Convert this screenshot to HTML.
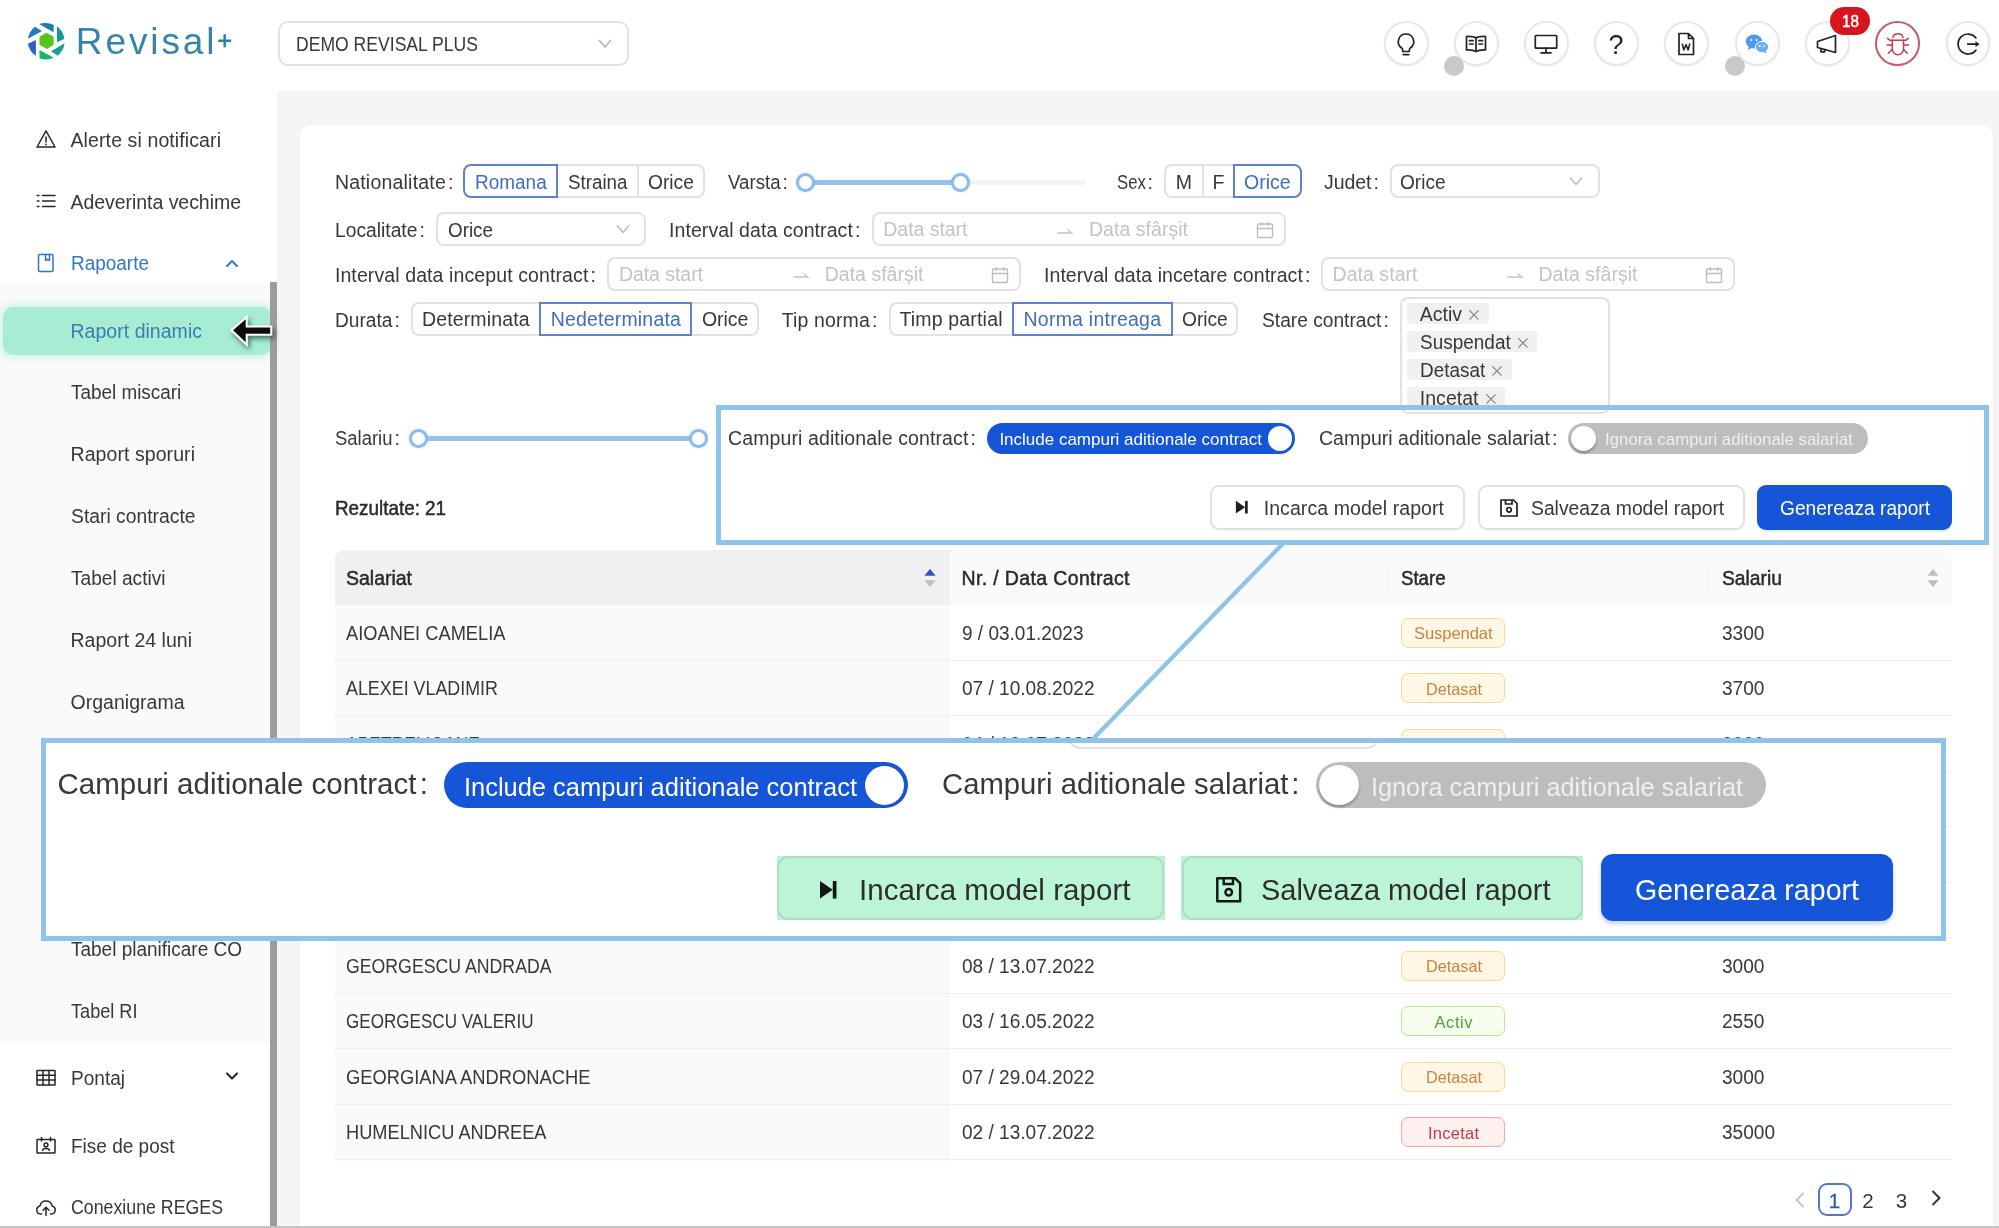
<!DOCTYPE html>
<html><head><meta charset="utf-8"><title>Revisal+</title>
<style>
html,body{margin:0;padding:0;background:#fff;}
body{width:1999px;height:1228px;position:relative;overflow:hidden;font-family:"Liberation Sans",sans-serif;}
div,span.t,svg.a{position:absolute;box-sizing:border-box;}
span.t{white-space:nowrap;display:block;}
#w{left:0;top:0;width:1999px;height:1228px;overflow:hidden;will-change:transform;}
</style></head><body><div id="w">
<div style="left:277.0px;top:91.4px;width:1722.0px;height:1137.0px;background:#f5f5f5;"></div>
<div style="left:300.0px;top:125.0px;width:1693.0px;height:1120.0px;background:#fff;border-radius:12px;"></div>
<div style="left:0.0px;top:283.0px;width:270.0px;height:760.0px;background:#fafafa;"></div>
<div style="left:270.0px;top:282.0px;width:7.0px;height:946.0px;background:#9c9c9c;"></div>
<svg class="a" style="left:20.0px;top:15.0px;" width="60" height="52" viewBox="0 0 1417 1228">
<path d="M450,215 A445,445 0 0 1 800,235 L790,405 Z" fill="#1a7fae"/>
<path d="M870,265 A445,445 0 0 1 1048,560 L875,645 Z" fill="#1a93a3"/>
<path d="M1052,670 A445,445 0 0 1 890,962 L735,855 Z" fill="#17a093"/>
<path d="M800,1012 A445,445 0 0 1 460,1022 L460,825 Z" fill="#16b868"/>
<path d="M375,967 A445,445 0 0 1 188,680 L375,590 Z" fill="#2a5fd0"/>
<path d="M188,562 A445,445 0 0 1 350,278 L520,375 Z" fill="#1a80b3"/>
<path d="M625,420 L795,515 L795,705 L640,800 L460,705 L460,515 Z" fill="#55c51c"/></svg>
<span class="t" style="left:75.8px;top:15.5px;font-size:37px;line-height:52px;color:#3585ab;font-weight:400;letter-spacing:2.897px;">Revisal</span>
<svg class="a" style="left:216.0px;top:32.0px;" width="18" height="18" viewBox="0 0 18 18"><path d="M8.700,2.200 V15.200 M2.200,8.700 H15.200" stroke="#2c7fa6" stroke-width="2.500" fill="none"/></svg>
<div style="left:278.0px;top:21.0px;width:351.0px;height:45.0px;border:2px solid #e1e1e1;border-radius:10px;background:#fff;"></div>
<span class="t" style="left:296.0px;top:31.0px;font-size:19.5px;line-height:27px;color:#383838;font-weight:400;transform:scaleX(0.9013);transform-origin:0 50%;">DEMO REVISAL PLUS</span>
<svg class="a" style="left:597.0px;top:38.0px;" width="16" height="12" viewBox="0 0 16 12"><path d="M2,2 L8,9 L14,2" fill="none" stroke="#b5b5b5" stroke-width="1.6"/></svg>
<div style="left:1444.0px;top:56.0px;width:20.0px;height:20.0px;background:#c9c9c9;border-radius:50%;"></div>
<div style="left:1725.0px;top:56.0px;width:20.0px;height:20.0px;background:#c9c9c9;border-radius:50%;"></div>
<div style="left:1383.9px;top:20.9px;width:44.8px;height:44.8px;border:2px solid #e7e7e7;border-radius:50%;background:#fff;box-shadow:0 1px 3px rgba(0,0,0,0.05);"></div>
<div style="left:1454.1px;top:20.9px;width:44.8px;height:44.8px;border:2px solid #e7e7e7;border-radius:50%;background:#fff;box-shadow:0 1px 3px rgba(0,0,0,0.05);"></div>
<div style="left:1524.1px;top:20.9px;width:44.8px;height:44.8px;border:2px solid #e7e7e7;border-radius:50%;background:#fff;box-shadow:0 1px 3px rgba(0,0,0,0.05);"></div>
<div style="left:1594.3px;top:20.9px;width:44.8px;height:44.8px;border:2px solid #e7e7e7;border-radius:50%;background:#fff;box-shadow:0 1px 3px rgba(0,0,0,0.05);"></div>
<div style="left:1664.3px;top:20.9px;width:44.8px;height:44.8px;border:2px solid #e7e7e7;border-radius:50%;background:#fff;box-shadow:0 1px 3px rgba(0,0,0,0.05);"></div>
<div style="left:1735.1px;top:20.9px;width:44.8px;height:44.8px;border:2px solid #e7e7e7;border-radius:50%;background:#fff;box-shadow:0 1px 3px rgba(0,0,0,0.05);"></div>
<div style="left:1805.1px;top:20.9px;width:44.8px;height:44.8px;border:2px solid #e7e7e7;border-radius:50%;background:#fff;box-shadow:0 1px 3px rgba(0,0,0,0.05);"></div>
<div style="left:1875.4px;top:20.9px;width:44.8px;height:44.8px;border:2px solid #c65c69;border-radius:50%;background:#fff;box-shadow:0 1px 3px rgba(0,0,0,0.05);"></div>
<div style="left:1945.6px;top:20.9px;width:44.8px;height:44.8px;border:2px solid #e7e7e7;border-radius:50%;background:#fff;box-shadow:0 1px 3px rgba(0,0,0,0.05);"></div>
<svg class="a" style="left:1394.0px;top:31.0px;" width="24" height="28" viewBox="0 0 24 28"><path d="M12,3 a7.600,7.600 0 0 1 4.600,13.700 c-0.900,0.800 -1.300,1.600 -1.300,2.600 v1.200 h-6.600 v-1.200 c0,-1 -0.400,-1.800 -1.300,-2.600 A7.600,7.600 0 0 1 12,3 Z" fill="none" stroke="#222" stroke-width="1.7" stroke-linecap="round" stroke-linejoin="round"/><path d="M9.200,23.600 h5.600" fill="none" stroke="#222" stroke-width="1.7" stroke-linecap="round" stroke-linejoin="round"/></svg>
<svg class="a" style="left:1464.0px;top:32.0px;" width="24" height="24" viewBox="0 0 24 24"><path d="M12,6 C10,4.6 6,4.3 2.5,4.5 V18 C6,17.8 10,18.2 12,19.6 C14,18.2 18,17.8 21.5,18 V4.5 C18,4.3 14,4.6 12,6 Z M12,6 V19.6" fill="none" stroke="#222" stroke-width="1.7" stroke-linecap="round" stroke-linejoin="round"/><path d="M5.5,8.7 h3.6 M5.5,12 h3.6 M14.9,8.7 h3.6 M14.9,12 h3.6" fill="none" stroke="#222" stroke-width="1.7" stroke-linecap="round" stroke-linejoin="round"/></svg>
<svg class="a" style="left:1534.0px;top:32.0px;" width="24" height="24" viewBox="0 0 24 24"><rect x="1.300" y="3.500" width="21.400" height="12.700" rx="0.800" fill="none" stroke="#222" stroke-width="1.7" stroke-linecap="round" stroke-linejoin="round"/><path d="M12,16.200 v4.300 M7,20.800 h10" fill="none" stroke="#222" stroke-width="1.7" stroke-linecap="round" stroke-linejoin="round"/></svg>
<span class="t" style="left:1608.5px;top:25.5px;font-size:27px;line-height:38px;color:#222;font-weight:400;letter-spacing:0.000px;">?</span>
<svg class="a" style="left:1674.0px;top:31.0px;" width="24" height="26" viewBox="0 0 24 26"><path d="M5,2.5 h9.5 l5,5 V23.5 H5 Z M14.5,2.5 v5 h5" fill="none" stroke="#222" stroke-width="1.7" stroke-linecap="round" stroke-linejoin="round"/><path d="M8.3,13 l1.6,6 l2.1,-5.4 l2.1,5.4 l1.6,-6" fill="none" stroke="#222" stroke-width="1.5" stroke-linejoin="round" stroke-linecap="round"/></svg>
<svg class="a" style="left:1744.0px;top:32.0px;" width="26" height="24" viewBox="0 0 26 24"><ellipse cx="10" cy="9.5" rx="8.2" ry="7" fill="#4c9bf0"/><path d="M5,14 l-1,4 l4.5,-2.4 Z" fill="#4c9bf0"/><ellipse cx="18" cy="15" rx="6.6" ry="5.6" fill="#6aaef5" stroke="#fff" stroke-width="1"/><path d="M21.5,19 l1.2,2.8 l-3.8,-1.8 Z" fill="#6aaef5"/><circle cx="7.2" cy="8" r="1" fill="#fff"/><circle cx="12.6" cy="8" r="1" fill="#fff"/><circle cx="15.8" cy="14" r="0.9" fill="#fff"/><circle cx="20" cy="14" r="0.9" fill="#fff"/></svg>
<svg class="a" style="left:1814.0px;top:32.0px;" width="26" height="24" viewBox="0 0 26 24"><path d="M3.5,9.5 L21.5,3.5 V20.5 L3.5,15.5 Z" fill="none" stroke="#222" stroke-width="1.7" stroke-linecap="round" stroke-linejoin="round"/><path d="M7,16.6 v3.2 h3.6 v-2.2" fill="none" stroke="#222" stroke-width="1.7" stroke-linecap="round" stroke-linejoin="round"/></svg>
<div style="left:1830.0px;top:6.8px;width:40.0px;height:28.4px;background:#d8141f;border-radius:14.200px;"></div>
<span class="t" style="left:1841.5px;top:10.8px;font-size:16px;line-height:22px;color:#fff;font-weight:400;transform:scaleX(0.9552);transform-origin:0 50%;-webkit-text-stroke:0.5px #fff;">18</span>
<svg class="a" style="left:1870.0px;top:15.0px;" width="129" height="60" viewBox="0 0 1999 930"><path d="M355,350 A78,68 0 0 1 510,350" fill="none" stroke="#c63a4c" stroke-width="23" stroke-linecap="round" stroke-linejoin="round"/><path d="M272,362 L305,392 H560 L592,362" fill="none" stroke="#c63a4c" stroke-width="23" stroke-linecap="round" stroke-linejoin="round"/><path d="M345,392 V520 A87.500,95 0 0 0 520,520 V392" fill="none" stroke="#c63a4c" stroke-width="23" stroke-linecap="round" stroke-linejoin="round"/><path d="M265,465 H345 M520,465 H597 M345,535 L285,592 M520,535 L578,592" fill="none" stroke="#c63a4c" stroke-width="23" stroke-linecap="round" stroke-linejoin="round"/><path d="M1642,355 A155,155 0 1 0 1642,545" fill="none" stroke="#222" stroke-width="26" stroke-linecap="round" stroke-linejoin="round"/><path d="M1515,452 H1650" fill="none" stroke="#222" stroke-width="26" stroke-linecap="round" stroke-linejoin="round"/><path d="M1635,408 L1700,452 L1635,496 Z" fill="#222"/></svg>
<svg class="a" style="left:35.0px;top:128.0px;" width="22" height="22" viewBox="0 0 22 22"><path d="M11,2.8 L20,19 H2 Z" fill="none" stroke="#262626" stroke-width="1.5" stroke-linecap="round" stroke-linejoin="round"/><path d="M11,9 v5" fill="none" stroke="#262626" stroke-width="1.5" stroke-linecap="round" stroke-linejoin="round"/><circle cx="11" cy="16.4" r="0.9" fill="#262626"/></svg>
<span class="t" style="left:70.5px;top:126.5px;font-size:19.5px;line-height:27px;color:#383838;font-weight:400;letter-spacing:0.107px;">Alerte si notificari</span>
<svg class="a" style="left:35.0px;top:190.0px;" width="22" height="22" viewBox="0 0 22 22"><path d="M7.5,5.5 H20 M7.5,11 H20 M7.5,16.5 H20" fill="none" stroke="#262626" stroke-width="1.5" stroke-linecap="round" stroke-linejoin="round"/><path d="M2.3,5.5 h1.6 M2.3,11 h1.6 M2.3,16.5 h1.6" fill="none" stroke="#262626" stroke-width="1.5" stroke-linecap="round" stroke-linejoin="round"/></svg>
<span class="t" style="left:70.5px;top:188.5px;font-size:19.5px;line-height:27px;color:#383838;font-weight:400;letter-spacing:-0.045px;">Adeverinta vechime</span>
<svg class="a" style="left:35.0px;top:252.0px;" width="22" height="22" viewBox="0 0 22 22"><rect x="3.5" y="2.5" width="14.5" height="17" rx="1" fill="none" stroke="#3576c4" stroke-width="1.5" stroke-linecap="round" stroke-linejoin="round"/><path d="M10.5,2.5 v6 l2,-1.4 l2,1.4 v-6" fill="none" stroke="#3576c4" stroke-width="1.5" stroke-linecap="round" stroke-linejoin="round"/></svg>
<span class="t" style="left:70.5px;top:250.0px;font-size:19.5px;line-height:27px;color:#3576c4;font-weight:400;transform:scaleX(0.9723);transform-origin:0 50%;">Rapoarte</span>
<svg class="a" style="left:224.0px;top:257.0px;" width="16" height="12" viewBox="0 0 16 12"><path d="M3,9 L8,4 L13,9" fill="none" stroke="#3576c4" stroke-width="2" stroke-linecap="round" stroke-linejoin="round"/></svg>
<div style="left:3.0px;top:306.5px;width:268.0px;height:48.0px;background:#a6edd4;border-radius:10px;box-shadow:0 0 8px 3px rgba(166,237,212,0.55);"></div>
<span class="t" style="left:70.5px;top:317.5px;font-size:19.5px;line-height:27px;color:#3a7cb4;font-weight:400;letter-spacing:0.027px;">Raport dinamic</span>
<div style="left:270.0px;top:282.0px;width:7.0px;height:946.0px;background:#9c9c9c;"></div>
<svg class="a" style="left:226.0px;top:312.0px;filter:drop-shadow(2px 3px 2.500px rgba(0,40,20,0.600));" width="52" height="38" viewBox="0 0 52 38"><path d="M7,18.300 L19.700,7.300 V15.500 H44.200 V21.700 H19.700 V30.300 Z" fill="#0c0c0c" stroke="#fff" stroke-width="4.200" stroke-linejoin="miter" paint-order="stroke"/></svg>
<span class="t" style="left:70.5px;top:379.0px;font-size:19.5px;line-height:27px;color:#383838;font-weight:400;transform:scaleX(0.9685);transform-origin:0 50%;">Tabel miscari</span>
<span class="t" style="left:70.5px;top:441.0px;font-size:19.5px;line-height:27px;color:#383838;font-weight:400;letter-spacing:0.073px;">Raport sporuri</span>
<span class="t" style="left:70.5px;top:503.0px;font-size:19.5px;line-height:27px;color:#383838;font-weight:400;transform:scaleX(0.9902);transform-origin:0 50%;">Stari contracte</span>
<span class="t" style="left:70.5px;top:565.0px;font-size:19.5px;line-height:27px;color:#383838;font-weight:400;transform:scaleX(0.9796);transform-origin:0 50%;">Tabel activi</span>
<span class="t" style="left:70.5px;top:627.0px;font-size:19.5px;line-height:27px;color:#383838;font-weight:400;letter-spacing:0.007px;">Raport 24 luni</span>
<span class="t" style="left:70.5px;top:688.5px;font-size:19.5px;line-height:27px;color:#383838;font-weight:400;letter-spacing:0.019px;">Organigrama</span>
<span class="t" style="left:70.5px;top:935.5px;font-size:19.5px;line-height:27px;color:#383838;font-weight:400;transform:scaleX(0.9738);transform-origin:0 50%;">Tabel planificare CO</span>
<span class="t" style="left:70.5px;top:997.5px;font-size:19.5px;line-height:27px;color:#383838;font-weight:400;transform:scaleX(0.9296);transform-origin:0 50%;">Tabel RI</span>
<svg class="a" style="left:35.0px;top:1067.0px;" width="22" height="22" viewBox="0 0 22 22"><rect x="2" y="3.5" width="18" height="14.5" rx="0.5" fill="none" stroke="#262626" stroke-width="1.5" stroke-linecap="round" stroke-linejoin="round"/><path d="M2,8.3 H20 M2,13.100 H20 M8,3.5 V18 M14,3.5 V18" fill="none" stroke="#262626" stroke-width="1.5" stroke-linecap="round" stroke-linejoin="round"/></svg>
<span class="t" style="left:70.5px;top:1065.0px;font-size:19.5px;line-height:27px;color:#383838;font-weight:400;transform:scaleX(0.9766);transform-origin:0 50%;">Pontaj</span>
<svg class="a" style="left:224.0px;top:1070.0px;" width="16" height="12" viewBox="0 0 16 12"><path d="M3,3.5 L8,8.5 L13,3.5" fill="none" stroke="#222" stroke-width="2" stroke-linecap="round" stroke-linejoin="round"/></svg>
<svg class="a" style="left:35.0px;top:1135.0px;" width="22" height="22" viewBox="0 0 22 22"><rect x="2" y="4.500" width="18" height="13.5" rx="0.5" fill="none" stroke="#262626" stroke-width="1.5" stroke-linecap="round" stroke-linejoin="round"/><path d="M6.500,2.5 v3.500 M15.5,2.5 v3.500" fill="none" stroke="#262626" stroke-width="1.5" stroke-linecap="round" stroke-linejoin="round"/><circle cx="11" cy="10" r="1.9" fill="none" stroke="#262626" stroke-width="1.5" stroke-linecap="round" stroke-linejoin="round"/><path d="M7.6,15.3 c0.5,-2.300 6.300,-2.300 6.800,0" fill="none" stroke="#262626" stroke-width="1.5" stroke-linecap="round" stroke-linejoin="round"/></svg>
<span class="t" style="left:70.5px;top:1132.5px;font-size:19.5px;line-height:27px;color:#383838;font-weight:400;transform:scaleX(0.9743);transform-origin:0 50%;">Fise de post</span>
<svg class="a" style="left:35.0px;top:1196.8px;" width="22" height="22" viewBox="0 0 22 22"><path d="M6.5,17 H5.500 a4,4 0 0 1 -0.600,-7.9 a6.200,6.200 0 0 1 12.200,0 a4,4 0 0 1 -0.600,7.900 H15.500" fill="none" stroke="#262626" stroke-width="1.5" stroke-linecap="round" stroke-linejoin="round"/><path d="M11,18.5 V10.500 M8,13.300 l3,-3 l3,3" fill="none" stroke="#262626" stroke-width="1.5" stroke-linecap="round" stroke-linejoin="round"/></svg>
<span class="t" style="left:70.5px;top:1194.0px;font-size:19.5px;line-height:27px;color:#383838;font-weight:400;transform:scaleX(0.9106);transform-origin:0 50%;">Conexiune REGES</span>
<div style="left:0.0px;top:1226.0px;width:1999.0px;height:2.0px;background:#c6c6c6;"></div>
<span class="t" style="left:334.9px;top:169.1px;font-size:19.5px;line-height:27px;color:#383838;font-weight:400;letter-spacing:0.210px;">Nationalitate</span>
<span class="t" style="left:448.1px;top:169.1px;font-size:19.5px;line-height:27px;color:#383838;font-weight:400;letter-spacing:0.000px;">:</span>
<div style="left:464.5px;top:164.3px;width:240.0px;height:33.3px;border:2px solid #e1e1e1;border-radius:8px;background:#fff;"></div>
<div style="left:556.0px;top:165.3px;width:2.0px;height:31.3px;background:#e1e1e1;"></div>
<div style="left:637.0px;top:165.3px;width:2.0px;height:31.3px;background:#e1e1e1;"></div>
<div style="left:463.0px;top:164.3px;width:94.7px;height:33.3px;border:2px solid #5d83cc;border-radius:8px 0 0 8px;background:#fff;"></div>
<span class="t" style="left:475.0px;top:168.7px;font-size:19.5px;line-height:27px;color:#3f6dbd;font-weight:400;transform:scaleX(0.9727);transform-origin:0 50%;">Romana</span>
<span class="t" style="left:567.7px;top:168.7px;font-size:19.5px;line-height:27px;color:#383838;font-weight:400;transform:scaleX(0.9614);transform-origin:0 50%;">Straina</span>
<span class="t" style="left:648.1px;top:168.7px;font-size:19.5px;line-height:27px;color:#383838;font-weight:400;transform:scaleX(0.9852);transform-origin:0 50%;">Orice</span>
<span class="t" style="left:727.7px;top:169.1px;font-size:19.5px;line-height:27px;color:#383838;font-weight:400;transform:scaleX(0.9583);transform-origin:0 50%;">Varsta</span>
<span class="t" style="left:782.6px;top:169.1px;font-size:19.5px;line-height:27px;color:#383838;font-weight:400;letter-spacing:0.000px;">:</span>
<div style="left:960.0px;top:180.0px;width:126.0px;height:5.0px;background:#f4f4f4;border-radius:3px;"></div>
<div style="left:805.5px;top:180.0px;width:154.5px;height:5.0px;background:#8fc3f0;border-radius:3px;"></div>
<div style="left:796.0px;top:173.0px;width:19.0px;height:19.0px;background:#fff;border:3px solid #8bbcec;border-radius:50%;box-shadow:0 0 2px rgba(120,170,230,0.500);"></div>
<div style="left:950.5px;top:173.0px;width:19.0px;height:19.0px;background:#fff;border:3px solid #8bbcec;border-radius:50%;box-shadow:0 0 2px rgba(120,170,230,0.500);"></div>
<span class="t" style="left:1116.5px;top:169.1px;font-size:19.5px;line-height:27px;color:#383838;font-weight:400;transform:scaleX(0.8578);transform-origin:0 50%;">Sex</span>
<span class="t" style="left:1147.6px;top:169.1px;font-size:19.5px;line-height:27px;color:#383838;font-weight:400;letter-spacing:0.000px;">:</span>
<div style="left:1164.3px;top:164.3px;width:136.7px;height:33.3px;border:2px solid #e1e1e1;border-radius:8px;background:#fff;"></div>
<div style="left:1202.0px;top:165.3px;width:2.0px;height:31.3px;background:#e1e1e1;"></div>
<div style="left:1233.0px;top:165.3px;width:2.0px;height:31.3px;background:#e1e1e1;"></div>
<span class="t" style="left:1175.7px;top:168.7px;font-size:19.5px;line-height:27px;color:#383838;font-weight:400;letter-spacing:0.000px;">M</span>
<span class="t" style="left:1212.5px;top:168.7px;font-size:19.5px;line-height:27px;color:#383838;font-weight:400;letter-spacing:0.000px;">F</span>
<div style="left:1233.0px;top:164.3px;width:69.4px;height:33.3px;border:2px solid #5d83cc;border-radius:0 8px 8px 0;background:#fff;"></div>
<span class="t" style="left:1244.1px;top:168.7px;font-size:19.5px;line-height:27px;color:#3f6dbd;font-weight:400;letter-spacing:-0.047px;">Orice</span>
<span class="t" style="left:1324.0px;top:169.1px;font-size:19.5px;line-height:27px;color:#383838;font-weight:400;letter-spacing:-0.095px;">Judet</span>
<span class="t" style="left:1373.6px;top:169.1px;font-size:19.5px;line-height:27px;color:#383838;font-weight:400;letter-spacing:0.000px;">:</span>
<div style="left:1390.0px;top:164.3px;width:209.5px;height:33.3px;border:2px solid #e1e1e1;border-radius:8px;background:#fff;"></div>
<span class="t" style="left:1400.4px;top:168.9px;font-size:19.5px;line-height:27px;color:#383838;font-weight:400;transform:scaleX(0.9788);transform-origin:0 50%;">Orice</span>
<svg class="a" style="left:1568.0px;top:175.0px;" width="16" height="12" viewBox="0 0 16 12"><path d="M2,2.500 L8,9.500 L14,2.500" fill="none" stroke="#bdbdbd" stroke-width="1.5"/></svg>
<span class="t" style="left:334.9px;top:216.5px;font-size:19.5px;line-height:27px;color:#383838;font-weight:400;transform:scaleX(0.9874);transform-origin:0 50%;">Localitate</span>
<span class="t" style="left:419.6px;top:216.5px;font-size:19.5px;line-height:27px;color:#383838;font-weight:400;letter-spacing:0.000px;">:</span>
<div style="left:435.7px;top:212.2px;width:210.3px;height:33.6px;border:2px solid #e1e1e1;border-radius:8px;background:#fff;"></div>
<span class="t" style="left:447.5px;top:216.9px;font-size:19.5px;line-height:27px;color:#383838;font-weight:400;transform:scaleX(0.9659);transform-origin:0 50%;">Orice</span>
<svg class="a" style="left:614.5px;top:223.0px;" width="16" height="12" viewBox="0 0 16 12"><path d="M2,2.500 L8,9.500 L14,2.500" fill="none" stroke="#bdbdbd" stroke-width="1.5"/></svg>
<span class="t" style="left:669.0px;top:216.5px;font-size:19.5px;line-height:27px;color:#383838;font-weight:400;letter-spacing:0.082px;">Interval data contract</span>
<span class="t" style="left:855.1px;top:216.5px;font-size:19.5px;line-height:27px;color:#383838;font-weight:400;letter-spacing:0.000px;">:</span>
<div style="left:872.2px;top:212.2px;width:414.0px;height:33.6px;border:2px solid #e1e1e1;border-radius:8px;background:#fff;"></div>
<span class="t" style="left:883.3px;top:216.0px;font-size:19.5px;line-height:27px;color:#c3c3c3;font-weight:400;letter-spacing:-0.037px;">Data start</span>
<svg class="a" style="left:1056.0px;top:224.5px;" width="18" height="12" viewBox="0 0 18 12"><path d="M1.500,8 H16 L11.500,4.500" fill="none" stroke="#c3c3c3" stroke-width="1.300"/></svg>
<span class="t" style="left:1089.0px;top:216.0px;font-size:19.5px;line-height:27px;color:#c3c3c3;font-weight:400;letter-spacing:0.035px;">Data sfârșit</span>
<svg class="a" style="left:1254.6px;top:220.0px;" width="20" height="20" viewBox="0 0 20 20"><rect x="2.500" y="4" width="15" height="13.500" rx="1" fill="none" stroke="#bdbdbd" stroke-width="1.400"/><path d="M2.500,8.500 H17.500 M6.500,2 V6 M13.500,2 V6" fill="none" stroke="#bdbdbd" stroke-width="1.400"/></svg>
<span class="t" style="left:334.9px;top:261.8px;font-size:19.5px;line-height:27px;color:#383838;font-weight:400;letter-spacing:0.104px;">Interval data inceput contract</span>
<span class="t" style="left:590.6px;top:261.8px;font-size:19.5px;line-height:27px;color:#383838;font-weight:400;letter-spacing:0.000px;">:</span>
<div style="left:607.0px;top:257.2px;width:414.0px;height:33.4px;border:2px solid #e1e1e1;border-radius:8px;background:#fff;"></div>
<span class="t" style="left:618.9px;top:260.9px;font-size:19.5px;line-height:27px;color:#c3c3c3;font-weight:400;letter-spacing:-0.048px;">Data start</span>
<svg class="a" style="left:792.0px;top:269.4px;" width="18" height="12" viewBox="0 0 18 12"><path d="M1.500,8 H16 L11.500,4.500" fill="none" stroke="#c3c3c3" stroke-width="1.300"/></svg>
<span class="t" style="left:824.7px;top:260.9px;font-size:19.5px;line-height:27px;color:#c3c3c3;font-weight:400;letter-spacing:0.017px;">Data sfârșit</span>
<svg class="a" style="left:989.8px;top:264.9px;" width="20" height="20" viewBox="0 0 20 20"><rect x="2.500" y="4" width="15" height="13.500" rx="1" fill="none" stroke="#bdbdbd" stroke-width="1.400"/><path d="M2.500,8.500 H17.500 M6.500,2 V6 M13.500,2 V6" fill="none" stroke="#bdbdbd" stroke-width="1.400"/></svg>
<span class="t" style="left:1044.0px;top:261.8px;font-size:19.5px;line-height:27px;color:#383838;font-weight:400;letter-spacing:0.064px;">Interval data incetare contract</span>
<span class="t" style="left:1305.1px;top:261.8px;font-size:19.5px;line-height:27px;color:#383838;font-weight:400;letter-spacing:0.000px;">:</span>
<div style="left:1320.9px;top:257.2px;width:414.1px;height:33.4px;border:2px solid #e1e1e1;border-radius:8px;background:#fff;"></div>
<span class="t" style="left:1332.5px;top:260.9px;font-size:19.5px;line-height:27px;color:#c3c3c3;font-weight:400;letter-spacing:0.052px;">Data start</span>
<svg class="a" style="left:1505.6px;top:269.4px;" width="18" height="12" viewBox="0 0 18 12"><path d="M1.500,8 H16 L11.500,4.500" fill="none" stroke="#c3c3c3" stroke-width="1.300"/></svg>
<span class="t" style="left:1538.5px;top:260.9px;font-size:19.5px;line-height:27px;color:#c3c3c3;font-weight:400;letter-spacing:0.035px;">Data sfârșit</span>
<svg class="a" style="left:1704.3px;top:264.9px;" width="20" height="20" viewBox="0 0 20 20"><rect x="2.500" y="4" width="15" height="13.500" rx="1" fill="none" stroke="#bdbdbd" stroke-width="1.400"/><path d="M2.500,8.500 H17.500 M6.500,2 V6 M13.500,2 V6" fill="none" stroke="#bdbdbd" stroke-width="1.400"/></svg>
<span class="t" style="left:334.9px;top:307.0px;font-size:19.5px;line-height:27px;color:#383838;font-weight:400;transform:scaleX(0.9811);transform-origin:0 50%;">Durata</span>
<span class="t" style="left:394.6px;top:307.0px;font-size:19.5px;line-height:27px;color:#383838;font-weight:400;letter-spacing:0.000px;">:</span>
<div style="left:411.4px;top:302.0px;width:347.4px;height:33.5px;border:2px solid #e1e1e1;border-radius:8px;background:#fff;"></div>
<div style="left:539.0px;top:303.0px;width:2.0px;height:31.5px;background:#e1e1e1;"></div>
<div style="left:690.0px;top:303.0px;width:2.0px;height:31.5px;background:#e1e1e1;"></div>
<span class="t" style="left:421.9px;top:306.4px;font-size:19.5px;line-height:27px;color:#383838;font-weight:400;letter-spacing:0.158px;">Determinata</span>
<div style="left:539.0px;top:302.0px;width:153.2px;height:33.5px;border:2px solid #5d83cc;border-radius:0;background:#fff;"></div>
<span class="t" style="left:550.7px;top:306.4px;font-size:19.5px;line-height:27px;color:#3f6dbd;font-weight:400;letter-spacing:0.191px;">Nedeterminata</span>
<span class="t" style="left:701.9px;top:306.4px;font-size:19.5px;line-height:27px;color:#383838;font-weight:400;letter-spacing:-0.047px;">Orice</span>
<span class="t" style="left:781.7px;top:307.0px;font-size:19.5px;line-height:27px;color:#383838;font-weight:400;letter-spacing:0.133px;">Tip norma</span>
<span class="t" style="left:872.1px;top:307.0px;font-size:19.5px;line-height:27px;color:#383838;font-weight:400;letter-spacing:0.000px;">:</span>
<div style="left:888.9px;top:302.0px;width:349.3px;height:33.5px;border:2px solid #e1e1e1;border-radius:8px;background:#fff;"></div>
<div style="left:1012.0px;top:303.0px;width:2.0px;height:31.5px;background:#e1e1e1;"></div>
<div style="left:1171.0px;top:303.0px;width:2.0px;height:31.5px;background:#e1e1e1;"></div>
<span class="t" style="left:899.4px;top:306.4px;font-size:19.5px;line-height:27px;color:#383838;font-weight:400;letter-spacing:0.178px;">Timp partial</span>
<div style="left:1012.0px;top:302.0px;width:160.5px;height:33.5px;border:2px solid #5d83cc;border-radius:0;background:#fff;"></div>
<span class="t" style="left:1023.5px;top:306.4px;font-size:19.5px;line-height:27px;color:#3f6dbd;font-weight:400;letter-spacing:0.238px;">Norma intreaga</span>
<span class="t" style="left:1182.0px;top:306.4px;font-size:19.5px;line-height:27px;color:#383838;font-weight:400;transform:scaleX(0.9809);transform-origin:0 50%;">Orice</span>
<span class="t" style="left:1261.9px;top:307.0px;font-size:19.5px;line-height:27px;color:#383838;font-weight:400;transform:scaleX(0.9838);transform-origin:0 50%;">Stare contract</span>
<span class="t" style="left:1383.6px;top:307.0px;font-size:19.5px;line-height:27px;color:#383838;font-weight:400;letter-spacing:0.000px;">:</span>
<div style="left:1400.4px;top:297.0px;width:209.8px;height:116.5px;border:2px solid #e1e1e1;border-radius:8px;background:#fff;"></div>
<div style="left:1407.0px;top:302.8px;width:82.0px;height:21.5px;background:#f0f0f0;border-radius:3px;"></div>
<span class="t" style="left:1419.8px;top:301.0px;font-size:19.5px;line-height:27px;color:#383838;font-weight:400;letter-spacing:-0.014px;">Activ</span>
<svg class="a" style="left:1468.0px;top:308.5px;" width="12" height="12" viewBox="0 0 12 12"><path d="M1.500,1.500 L10.500,10.500 M10.500,1.500 L1.500,10.500" stroke="#8a8a8a" stroke-width="1.200" fill="none"/></svg>
<div style="left:1407.0px;top:330.8px;width:130.0px;height:21.5px;background:#f0f0f0;border-radius:3px;"></div>
<span class="t" style="left:1419.8px;top:329.0px;font-size:19.5px;line-height:27px;color:#383838;font-weight:400;transform:scaleX(0.9727);transform-origin:0 50%;">Suspendat</span>
<svg class="a" style="left:1516.5px;top:336.5px;" width="12" height="12" viewBox="0 0 12 12"><path d="M1.500,1.500 L10.500,10.500 M10.500,1.500 L1.500,10.500" stroke="#8a8a8a" stroke-width="1.200" fill="none"/></svg>
<div style="left:1407.0px;top:358.8px;width:104.5px;height:21.5px;background:#f0f0f0;border-radius:3px;"></div>
<span class="t" style="left:1419.8px;top:357.0px;font-size:19.5px;line-height:27px;color:#383838;font-weight:400;transform:scaleX(0.9702);transform-origin:0 50%;">Detasat</span>
<svg class="a" style="left:1491.0px;top:364.5px;" width="12" height="12" viewBox="0 0 12 12"><path d="M1.500,1.500 L10.500,10.500 M10.500,1.500 L1.500,10.500" stroke="#8a8a8a" stroke-width="1.200" fill="none"/></svg>
<div style="left:1407.0px;top:386.8px;width:98.0px;height:21.5px;background:#f0f0f0;border-radius:3px;"></div>
<span class="t" style="left:1419.8px;top:385.0px;font-size:19.5px;line-height:27px;color:#383838;font-weight:400;letter-spacing:0.026px;">Incetat</span>
<svg class="a" style="left:1484.5px;top:392.5px;" width="12" height="12" viewBox="0 0 12 12"><path d="M1.500,1.500 L10.500,10.500 M10.500,1.500 L1.500,10.500" stroke="#8a8a8a" stroke-width="1.200" fill="none"/></svg>
<span class="t" style="left:334.9px;top:425.0px;font-size:19.5px;line-height:27px;color:#383838;font-weight:400;transform:scaleX(0.9460);transform-origin:0 50%;">Salariu</span>
<span class="t" style="left:394.6px;top:425.0px;font-size:19.5px;line-height:27px;color:#383838;font-weight:400;letter-spacing:0.000px;">:</span>
<div style="left:418.0px;top:436.0px;width:280.5px;height:5.0px;background:#8fc3f0;border-radius:3px;"></div>
<div style="left:408.5px;top:429.0px;width:19.0px;height:19.0px;background:#fff;border:3px solid #8bbcec;border-radius:50%;box-shadow:0 0 2px rgba(120,170,230,0.500);"></div>
<div style="left:689.0px;top:429.0px;width:19.0px;height:19.0px;background:#fff;border:3px solid #8bbcec;border-radius:50%;box-shadow:0 0 2px rgba(120,170,230,0.500);"></div>
<span class="t" style="left:728.0px;top:425.0px;font-size:19.5px;line-height:27px;color:#383838;font-weight:400;letter-spacing:0.113px;">Campuri aditionale contract</span>
<span class="t" style="left:970.6px;top:425.0px;font-size:19.5px;line-height:27px;color:#383838;font-weight:400;letter-spacing:0.000px;">:</span>
<div style="left:986.6px;top:422.5px;width:308.9px;height:31.5px;background:#1556d9;border-radius:15.75px;"></div>
<span class="t" style="left:999.4px;top:427.5px;font-size:17px;line-height:24px;color:#fff;font-weight:400;letter-spacing:-0.003px;">Include campuri aditionale contract</span>
<div style="left:1267.5px;top:426.0px;width:24.5px;height:24.5px;background:#fff;border-radius:50%;"></div>
<span class="t" style="left:1319.0px;top:425.0px;font-size:19.5px;line-height:27px;color:#383838;font-weight:400;letter-spacing:-0.002px;">Campuri aditionale salariat</span>
<span class="t" style="left:1552.1px;top:425.0px;font-size:19.5px;line-height:27px;color:#383838;font-weight:400;letter-spacing:0.000px;">:</span>
<div style="left:1567.7px;top:422.5px;width:300.3px;height:31.5px;background:#bdbdbd;border-radius:15.75px;"></div>
<span class="t" style="left:1604.6px;top:427.8px;font-size:17px;line-height:24px;color:#efefef;font-weight:400;transform:scaleX(0.9895);transform-origin:0 50%;">Ignora campuri aditionale salariat</span>
<div style="left:1570.7px;top:425.5px;width:25.5px;height:25.5px;background:#fff;border-radius:50%;box-shadow:0 2px 3px rgba(0,0,0,0.3);"></div>
<span class="t" style="left:334.9px;top:495.0px;font-size:19.5px;line-height:27px;color:#2a2a2a;font-weight:400;transform:scaleX(0.9668);transform-origin:0 50%;-webkit-text-stroke:0.47px #2a2a2a;">Rezultate: 21</span>
<div style="left:1209.7px;top:484.5px;width:255.5px;height:45.0px;border:2px solid #e1e1e1;border-radius:9px;background:#fff;box-shadow:0 2px 0 rgba(0,0,0,0.02);"></div>
<svg class="a" style="left:1232.8px;top:498.3px;" width="18.4" height="18.4" viewBox="0 0 16 16"><path d="M2.500,2.500 L10.500,8 L2.500,13.500 Z" fill="#1f1f1f"/><rect x="10.500" y="2.500" width="2.300" height="11" fill="#1f1f1f"/></svg>
<span class="t" style="left:1263.7px;top:495.0px;font-size:19.5px;line-height:27px;color:#383838;font-weight:400;letter-spacing:0.077px;">Incarca model raport</span>
<div style="left:1477.8px;top:484.5px;width:267.5px;height:45.0px;border:2px solid #e1e1e1;border-radius:9px;background:#fff;box-shadow:0 2px 0 rgba(0,0,0,0.02);"></div>
<svg class="a" style="left:1498.0px;top:496.5px;" width="22.0" height="22.0" viewBox="0 0 22 22"><path d="M3,3 H15.500 L19,6.500 V19 H3 Z" fill="none" stroke="#1f1f1f" stroke-width="1.700" stroke-linejoin="round"/><path d="M7.500,3 V7 H14 V3" fill="none" stroke="#1f1f1f" stroke-width="1.700"/><circle cx="11" cy="12.800" r="2.300" fill="none" stroke="#1f1f1f" stroke-width="1.700"/></svg>
<span class="t" style="left:1530.8px;top:495.0px;font-size:19.5px;line-height:27px;color:#383838;font-weight:400;transform:scaleX(0.9902);transform-origin:0 50%;">Salveaza model raport</span>
<div style="left:1757.0px;top:484.5px;width:195.3px;height:45.0px;background:#1556d9;border-radius:9px;box-shadow:0 2px 0 rgba(5,95,255,0.10);"></div>
<span class="t" style="left:1780.4px;top:495.0px;font-size:19.5px;line-height:27px;color:#fff;font-weight:400;transform:scaleX(0.9814);transform-origin:0 50%;">Genereaza raport</span>
<div style="left:334.5px;top:549.7px;width:1617.5px;height:55.3px;background:#fafafa;border-radius:9px 9px 0 0;"></div>
<div style="left:334.5px;top:549.7px;width:615.5px;height:55.3px;background:#f0f0f0;border-radius:9px 0 0 0;"></div>
<div style="left:334.5px;top:605.0px;width:615.5px;height:555.5px;background:#fafafa;"></div>
<div style="left:1388.0px;top:565.5px;width:1.0px;height:24.5px;background:#eeeeee;"></div>
<div style="left:1708.0px;top:565.5px;width:1.0px;height:24.5px;background:#eeeeee;"></div>
<span class="t" style="left:346.0px;top:565.0px;font-size:19.5px;line-height:27px;color:#2a2a2a;font-weight:400;letter-spacing:-0.017px;-webkit-text-stroke:0.47px #2a2a2a;">Salariat</span>
<span class="t" style="left:961.5px;top:565.0px;font-size:19.5px;line-height:27px;color:#2a2a2a;font-weight:400;letter-spacing:0.362px;-webkit-text-stroke:0.47px #2a2a2a;">Nr. / Data Contract</span>
<span class="t" style="left:1401.0px;top:565.0px;font-size:19.5px;line-height:27px;color:#2a2a2a;font-weight:400;transform:scaleX(0.9547);transform-origin:0 50%;-webkit-text-stroke:0.47px #2a2a2a;">Stare</span>
<span class="t" style="left:1721.5px;top:565.0px;font-size:19.5px;line-height:27px;color:#2a2a2a;font-weight:400;transform:scaleX(0.9884);transform-origin:0 50%;-webkit-text-stroke:0.47px #2a2a2a;">Salariu</span>
<svg class="a" style="left:923.0px;top:566.5px;" width="14" height="22" viewBox="0 0 14 22"><path d="M7,2 L12.600,8.800 H1.400 Z" fill="#2458c9"/><path d="M7,20 L12.600,13.200 H1.400 Z" fill="#bfbfbf"/></svg>
<svg class="a" style="left:1925.5px;top:566.5px;" width="14" height="22" viewBox="0 0 14 22"><path d="M7,2 L12.600,8.800 H1.400 Z" fill="#bfbfbf"/><path d="M7,20 L12.600,13.200 H1.400 Z" fill="#bfbfbf"/></svg>
<div style="left:334.5px;top:660.0px;width:1617.5px;height:1.0px;background:#eeeeee;"></div>
<span class="t" style="left:346.0px;top:619.9px;font-size:19.5px;line-height:27px;color:#383838;font-weight:400;transform:scaleX(0.9375);transform-origin:0 50%;">AIOANEI CAMELIA</span>
<span class="t" style="left:961.5px;top:619.9px;font-size:19.5px;line-height:27px;color:#383838;font-weight:400;transform:scaleX(0.9743);transform-origin:0 50%;">9 / 03.01.2023</span>
<div style="left:1400.8px;top:617.9px;width:104.7px;height:30.0px;background:#fff7e6;border:1.500px solid #ffd591;border-radius:7px;"></div>
<span class="t" style="left:1414.0px;top:622.4px;font-size:16.5px;line-height:23px;color:#cc823e;font-weight:400;letter-spacing:-0.049px;">Suspendat</span>
<span class="t" style="left:1721.5px;top:619.9px;font-size:19.5px;line-height:27px;color:#383838;font-weight:400;transform:scaleX(0.9797);transform-origin:0 50%;">3300</span>
<div style="left:334.5px;top:715.0px;width:1617.5px;height:1.0px;background:#eeeeee;"></div>
<span class="t" style="left:346.0px;top:675.4px;font-size:19.5px;line-height:27px;color:#383838;font-weight:400;transform:scaleX(0.9167);transform-origin:0 50%;">ALEXEI VLADIMIR</span>
<span class="t" style="left:961.5px;top:675.4px;font-size:19.5px;line-height:27px;color:#383838;font-weight:400;transform:scaleX(0.9775);transform-origin:0 50%;">07 / 10.08.2022</span>
<div style="left:1400.8px;top:673.4px;width:104.7px;height:30.0px;background:#fff7e6;border:1.500px solid #ffd591;border-radius:7px;"></div>
<span class="t" style="left:1425.5px;top:677.9px;font-size:16.5px;line-height:23px;color:#cc823e;font-weight:400;transform:scaleX(0.9849);transform-origin:0 50%;">Detasat</span>
<span class="t" style="left:1721.5px;top:675.4px;font-size:19.5px;line-height:27px;color:#383838;font-weight:400;transform:scaleX(0.9797);transform-origin:0 50%;">3700</span>
<div style="left:334.5px;top:771.0px;width:1617.5px;height:1.0px;background:#eeeeee;"></div>
<span class="t" style="left:346.0px;top:730.9px;font-size:19.5px;line-height:27px;color:#383838;font-weight:400;transform:scaleX(0.8961);transform-origin:0 50%;">APETREI IOANE</span>
<span class="t" style="left:961.5px;top:730.9px;font-size:19.5px;line-height:27px;color:#383838;font-weight:400;transform:scaleX(0.9775);transform-origin:0 50%;">04 / 13.07.2022</span>
<div style="left:1400.8px;top:728.9px;width:104.7px;height:30.0px;background:#fff7e6;border:1.500px solid #ffd591;border-radius:7px;"></div>
<span class="t" style="left:1425.5px;top:733.4px;font-size:16.5px;line-height:23px;color:#cc823e;font-weight:400;transform:scaleX(0.9849);transform-origin:0 50%;">Detasat</span>
<span class="t" style="left:1721.5px;top:730.9px;font-size:19.5px;line-height:27px;color:#383838;font-weight:400;transform:scaleX(0.9797);transform-origin:0 50%;">3000</span>
<div style="left:334.5px;top:826.0px;width:1617.5px;height:1.0px;background:#eeeeee;"></div>
<div style="left:334.5px;top:882.0px;width:1617.5px;height:1.0px;background:#eeeeee;"></div>
<div style="left:334.5px;top:937.0px;width:1617.5px;height:1.0px;background:#eeeeee;"></div>
<div style="left:334.5px;top:993.0px;width:1617.5px;height:1.0px;background:#eeeeee;"></div>
<span class="t" style="left:346.0px;top:952.8px;font-size:19.5px;line-height:27px;color:#383838;font-weight:400;transform:scaleX(0.9075);transform-origin:0 50%;">GEORGESCU ANDRADA</span>
<span class="t" style="left:961.5px;top:952.8px;font-size:19.5px;line-height:27px;color:#383838;font-weight:400;transform:scaleX(0.9775);transform-origin:0 50%;">08 / 13.07.2022</span>
<div style="left:1400.8px;top:950.8px;width:104.7px;height:30.0px;background:#fff7e6;border:1.500px solid #ffd591;border-radius:7px;"></div>
<span class="t" style="left:1425.5px;top:955.3px;font-size:16.5px;line-height:23px;color:#cc823e;font-weight:400;transform:scaleX(0.9849);transform-origin:0 50%;">Detasat</span>
<span class="t" style="left:1721.5px;top:952.8px;font-size:19.5px;line-height:27px;color:#383838;font-weight:400;transform:scaleX(0.9797);transform-origin:0 50%;">3000</span>
<div style="left:334.5px;top:1048.0px;width:1617.5px;height:1.0px;background:#eeeeee;"></div>
<span class="t" style="left:346.0px;top:1008.3px;font-size:19.5px;line-height:27px;color:#383838;font-weight:400;transform:scaleX(0.8754);transform-origin:0 50%;">GEORGESCU VALERIU</span>
<span class="t" style="left:961.5px;top:1008.3px;font-size:19.5px;line-height:27px;color:#383838;font-weight:400;transform:scaleX(0.9775);transform-origin:0 50%;">03 / 16.05.2022</span>
<div style="left:1400.8px;top:1006.3px;width:104.7px;height:30.0px;background:#f6ffed;border:1.500px solid #b7eb8f;border-radius:7px;"></div>
<span class="t" style="left:1434.5px;top:1010.8px;font-size:16.5px;line-height:23px;color:#4fa038;font-weight:400;letter-spacing:0.561px;">Activ</span>
<span class="t" style="left:1721.5px;top:1008.3px;font-size:19.5px;line-height:27px;color:#383838;font-weight:400;transform:scaleX(0.9797);transform-origin:0 50%;">2550</span>
<div style="left:334.5px;top:1104.0px;width:1617.5px;height:1.0px;background:#eeeeee;"></div>
<span class="t" style="left:346.0px;top:1063.8px;font-size:19.5px;line-height:27px;color:#383838;font-weight:400;transform:scaleX(0.9402);transform-origin:0 50%;">GEORGIANA ANDRONACHE</span>
<span class="t" style="left:961.5px;top:1063.8px;font-size:19.5px;line-height:27px;color:#383838;font-weight:400;transform:scaleX(0.9775);transform-origin:0 50%;">07 / 29.04.2022</span>
<div style="left:1400.8px;top:1061.8px;width:104.7px;height:30.0px;background:#fff7e6;border:1.500px solid #ffd591;border-radius:7px;"></div>
<span class="t" style="left:1425.5px;top:1066.3px;font-size:16.5px;line-height:23px;color:#cc823e;font-weight:400;transform:scaleX(0.9849);transform-origin:0 50%;">Detasat</span>
<span class="t" style="left:1721.5px;top:1063.8px;font-size:19.5px;line-height:27px;color:#383838;font-weight:400;transform:scaleX(0.9797);transform-origin:0 50%;">3000</span>
<div style="left:334.5px;top:1159.0px;width:1617.5px;height:1.0px;background:#eeeeee;"></div>
<span class="t" style="left:346.0px;top:1119.3px;font-size:19.5px;line-height:27px;color:#383838;font-weight:400;transform:scaleX(0.9346);transform-origin:0 50%;">HUMELNICU ANDREEA</span>
<span class="t" style="left:961.5px;top:1119.3px;font-size:19.5px;line-height:27px;color:#383838;font-weight:400;transform:scaleX(0.9775);transform-origin:0 50%;">02 / 13.07.2022</span>
<div style="left:1400.8px;top:1117.3px;width:104.7px;height:30.0px;background:#fff1f0;border:1.500px solid #ffa39e;border-radius:7px;"></div>
<span class="t" style="left:1428.0px;top:1121.8px;font-size:16.5px;line-height:23px;color:#c03a45;font-weight:400;letter-spacing:0.245px;">Incetat</span>
<span class="t" style="left:1721.5px;top:1119.3px;font-size:19.5px;line-height:27px;color:#383838;font-weight:400;transform:scaleX(0.9773);transform-origin:0 50%;">35000</span>
<svg class="a" style="left:1793.0px;top:1190.0px;" width="14" height="20" viewBox="0 0 14 20"><path d="M10.500,3 L3.500,10 L10.500,17" fill="none" stroke="#c4c4c4" stroke-width="1.800"/></svg>
<div style="left:1818.0px;top:1183.0px;width:33.5px;height:33.0px;border:2px solid #5078c6;border-radius:9px;background:#fff;"></div>
<span class="t" style="left:1828.8px;top:1185.5px;font-size:20.5px;line-height:29px;color:#2f5cb8;font-weight:400;letter-spacing:0.000px;-webkit-text-stroke:0.300px #2f5cb8;">1</span>
<span class="t" style="left:1862.3px;top:1185.5px;font-size:20.5px;line-height:29px;color:#383838;font-weight:400;letter-spacing:0.000px;">2</span>
<span class="t" style="left:1895.8px;top:1185.5px;font-size:20.5px;line-height:29px;color:#383838;font-weight:400;letter-spacing:0.000px;">3</span>
<svg class="a" style="left:1929.0px;top:1188.0px;" width="14" height="20" viewBox="0 0 14 20"><path d="M3.500,3 L10.500,10 L3.500,17" fill="none" stroke="#333" stroke-width="2"/></svg>
<div style="left:716.0px;top:405.0px;width:1273.0px;height:139.5px;border:5px solid #8fc4ea;"></div>
<svg class="a" style="left:1080.0px;top:538.0px;" width="220" height="210" viewBox="0 0 220 210"><path d="M204.500,4 L12,202" stroke="#8fc4ea" stroke-width="4.300" fill="none"/></svg>
<div style="left:41.0px;top:738.0px;width:1905.0px;height:203.0px;border:5px solid #8fc4ea;background:#fff;"></div>
<div style="left:46.0px;top:743.0px;width:1895.5px;height:193.0px;overflow:hidden;"><div style="left:1021.500px;top:-45px;width:311px;height:50.500px;border:2px solid #e2e2e2;border-radius:12px;"></div></div>
<span class="t" style="left:57.5px;top:763.2px;font-size:29.5px;line-height:41px;color:#383838;font-weight:400;letter-spacing:-0.008px;">Campuri aditionale contract</span>
<span class="t" style="left:419.8px;top:763.2px;font-size:29.5px;line-height:41px;color:#383838;font-weight:400;letter-spacing:0.000px;">:</span>
<div style="left:444.0px;top:762.0px;width:463.5px;height:46.0px;background:#1556d9;border-radius:23.0px;"></div>
<span class="t" style="left:464.0px;top:768.6px;font-size:25.5px;line-height:36px;color:#fff;font-weight:400;letter-spacing:-0.031px;">Include campuri aditionale contract</span>
<div style="left:865.0px;top:765.5px;width:39.0px;height:39.0px;background:#fff;border-radius:50%;"></div>
<span class="t" style="left:941.5px;top:763.2px;font-size:29.5px;line-height:41px;color:#383838;font-weight:400;transform:scaleX(0.9918);transform-origin:0 50%;">Campuri aditionale salariat</span>
<span class="t" style="left:1291.3px;top:763.2px;font-size:29.5px;line-height:41px;color:#383838;font-weight:400;letter-spacing:0.000px;">:</span>
<div style="left:1316.0px;top:762.0px;width:450.0px;height:46.0px;background:#bdbdbd;border-radius:23.0px;"></div>
<span class="t" style="left:1371.0px;top:769.0px;font-size:25.5px;line-height:36px;color:#efefef;font-weight:400;transform:scaleX(0.9903);transform-origin:0 50%;">Ignora campuri aditionale salariat</span>
<div style="left:1319.0px;top:765.0px;width:40.0px;height:40.0px;background:#fff;border-radius:50%;box-shadow:0 2px 3px rgba(0,0,0,0.3);"></div>
<div style="left:776.5px;top:856.0px;width:388.0px;height:63.5px;background:#bcf5d6;"></div>
<div style="left:777.0px;top:856.0px;width:387.0px;height:63.5px;background:#bcf5d6;border:2px solid #aedcc5;border-radius:11px;"></div>
<svg class="a" style="left:815.5px;top:876.9px;" width="25.6" height="25.6" viewBox="0 0 16 16"><path d="M2.500,2.500 L10.500,8 L2.500,13.500 Z" fill="#151515"/><rect x="10.500" y="2.500" width="2.300" height="11" fill="#151515"/></svg>
<span class="t" style="left:859.0px;top:868.8px;font-size:29.5px;line-height:41px;color:#2e2e2e;font-weight:400;letter-spacing:0.051px;">Incarca model raport</span>
<div style="left:1181.0px;top:856.0px;width:402.0px;height:63.5px;background:#bcf5d6;"></div>
<div style="left:1181.5px;top:856.0px;width:401.0px;height:63.5px;background:#bcf5d6;border:2px solid #aedcc5;border-radius:11px;"></div>
<svg class="a" style="left:1213.3px;top:873.6px;" width="31.459999999999997" height="31.459999999999997" viewBox="0 0 22 22"><path d="M3,3 H15.500 L19,6.500 V19 H3 Z" fill="none" stroke="#151515" stroke-width="1.700" stroke-linejoin="round"/><path d="M7.500,3 V7 H14 V3" fill="none" stroke="#151515" stroke-width="1.700"/><circle cx="11" cy="12.800" r="2.300" fill="none" stroke="#151515" stroke-width="1.700"/></svg>
<span class="t" style="left:1261.0px;top:868.8px;font-size:29.5px;line-height:41px;color:#2e2e2e;font-weight:400;transform:scaleX(0.9808);transform-origin:0 50%;">Salveaza model raport</span>
<div style="left:1600.5px;top:854.0px;width:292.5px;height:67.0px;background:#1556d9;border-radius:12px;box-shadow:0 3px 4px rgba(21,86,217,0.25);"></div>
<span class="t" style="left:1635.0px;top:868.8px;font-size:29.5px;line-height:41px;color:#fff;font-weight:400;transform:scaleX(0.9688);transform-origin:0 50%;">Genereaza raport</span>
</div></body></html>
